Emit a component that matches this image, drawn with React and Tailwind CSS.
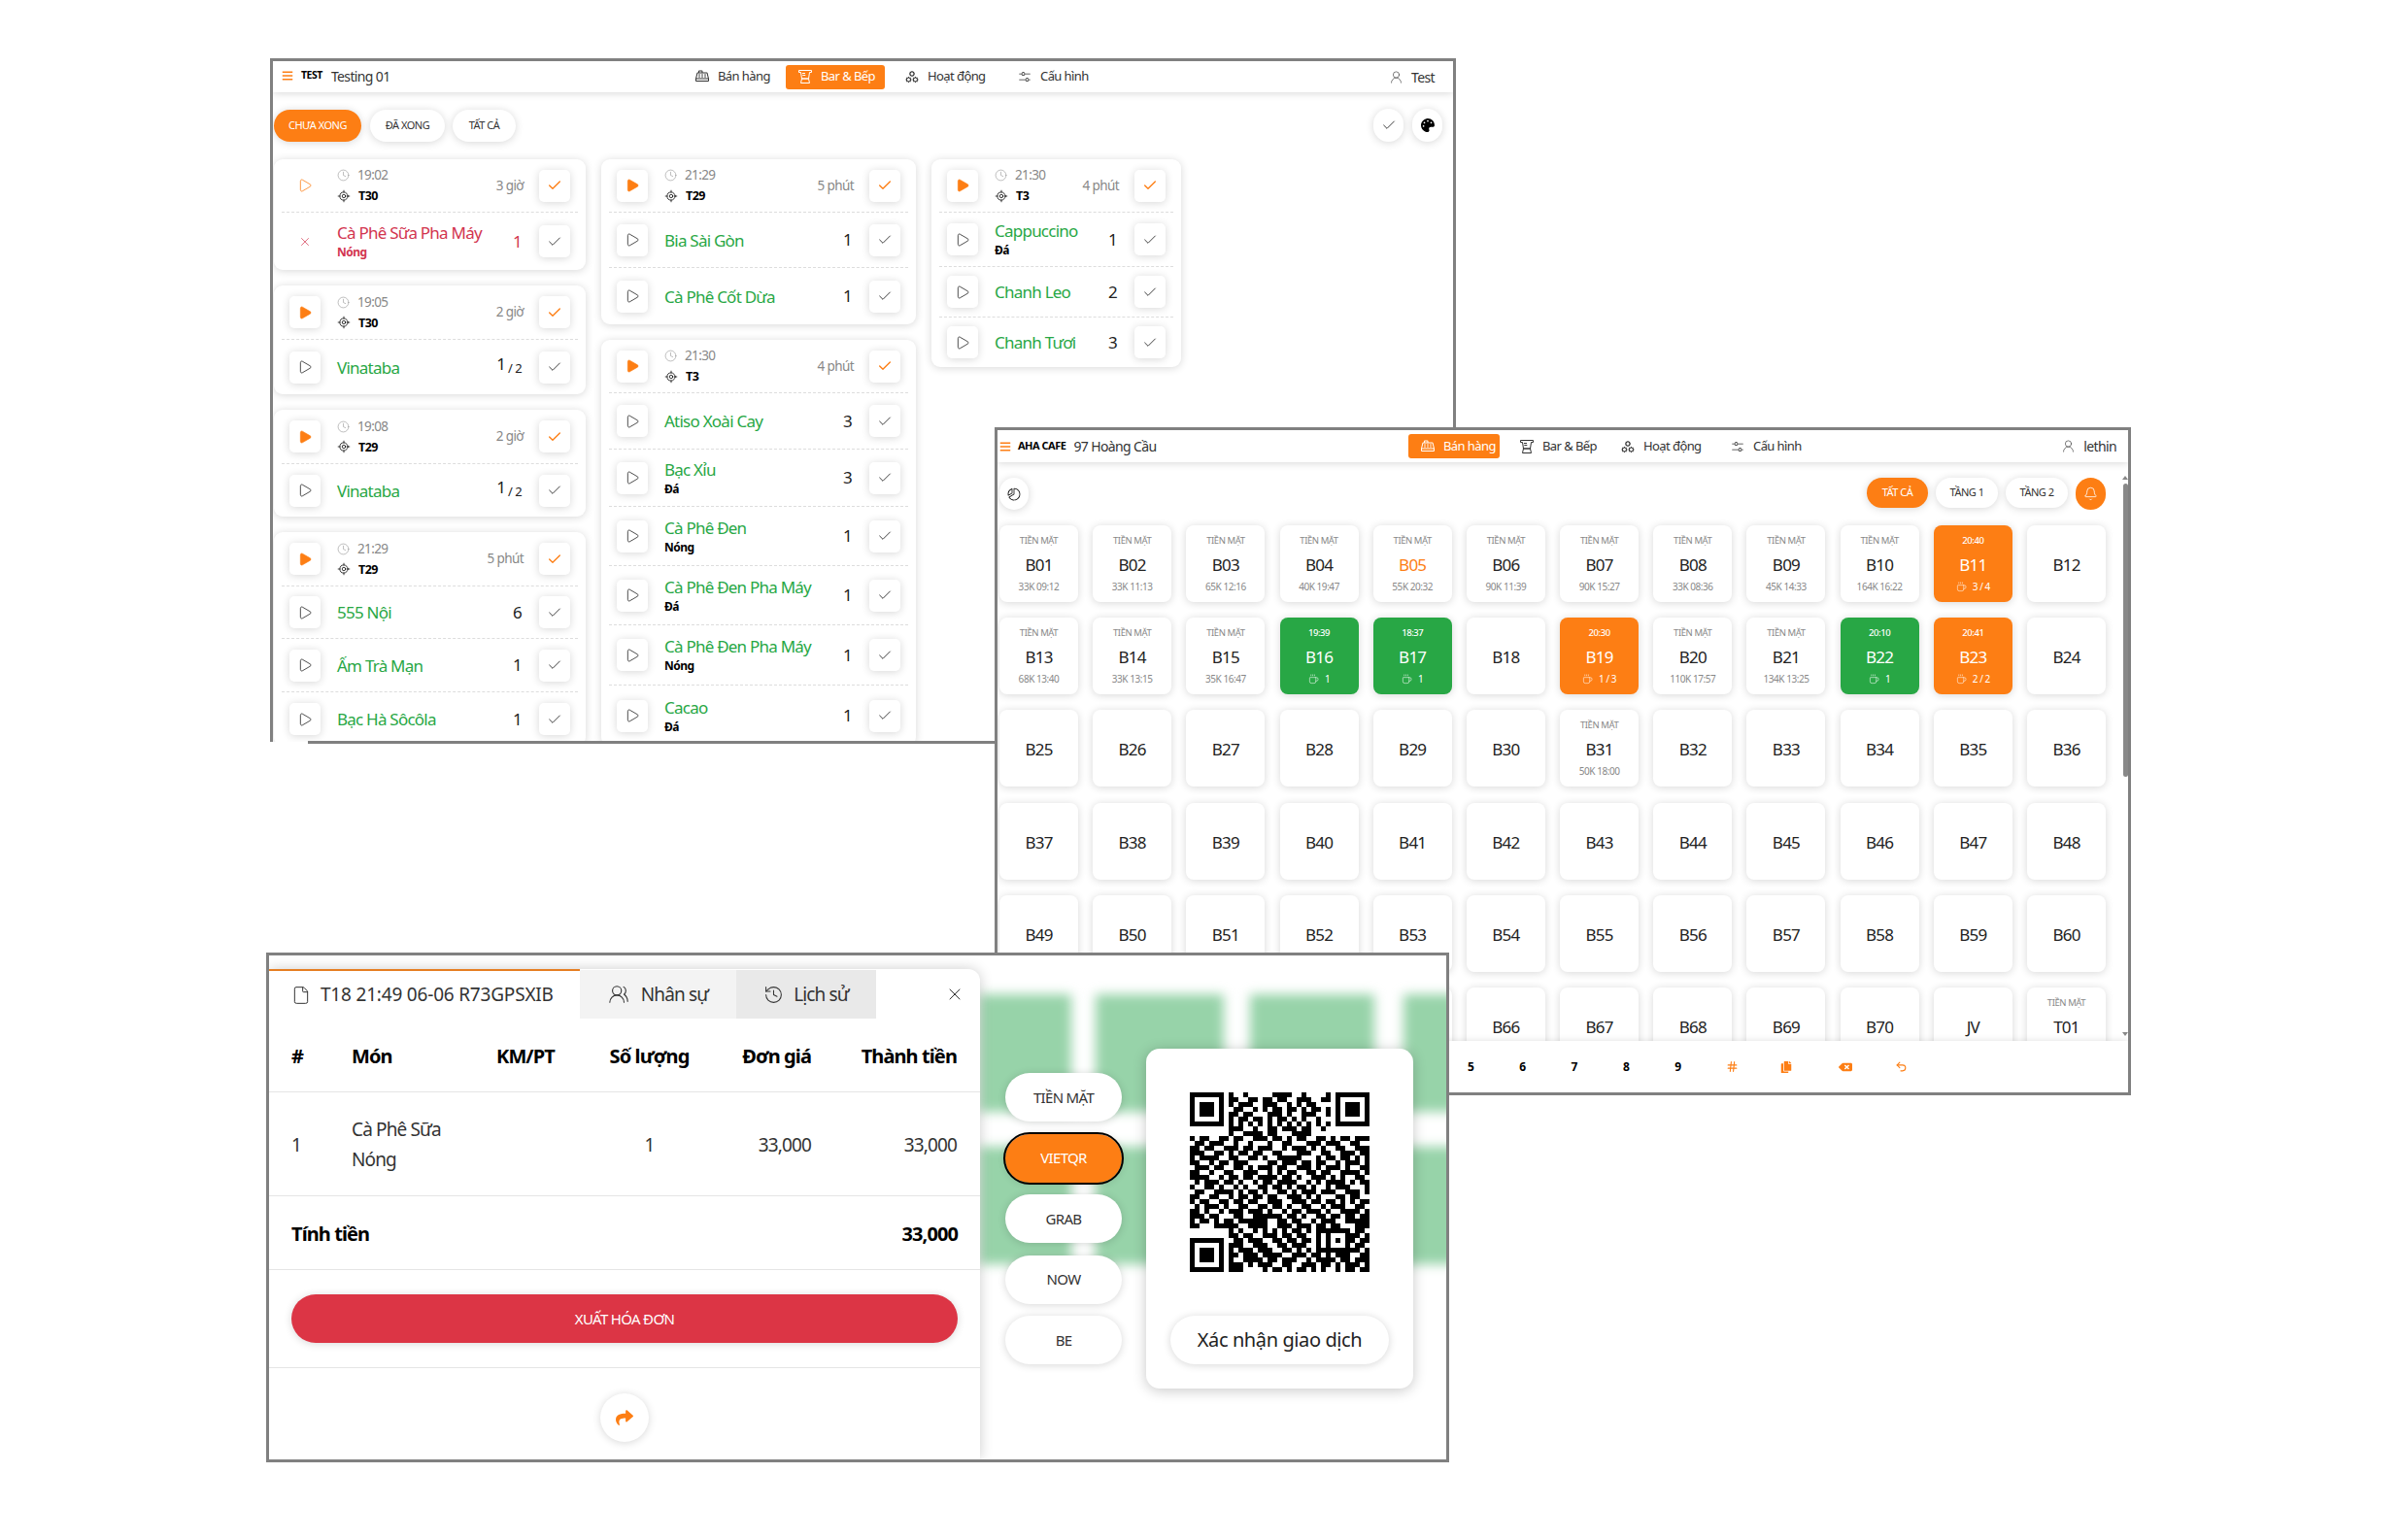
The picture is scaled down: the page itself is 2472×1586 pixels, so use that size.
import { Bell, Check, Clock, Coffee, File, Hash, History, LocateFixed, Play, Undo2, UserRound, UsersRound, X } from "lucide-react";
import { FaBackspace, FaBars, FaCopy, FaPalette, FaShare } from "react-icons/fa";
import { LiaCogsSolid } from "react-icons/lia";
import { PiCashRegister, PiChartPieSliceLight, PiSlidersHorizontalLight } from "react-icons/pi";

const QR_ROWS = [
  "0000000010010000011110010000100000000",
  "0000000011001101101100111001100000000",
  "0000000010111001110010101100000000000",
  "0000000001100101011011010110100000000",
  "0000000011011000111010011100100000000",
  "0000000010110110101101010010000000000",
  "0000000010101010101010101010100000000",
  "0000000011100100110111011001000000000",
  "0000000010011110110001111000000000000",
  "1011001101100111011010110011010110111",
  "0110111001001000100110001110111001100",
  "1101100111011011100101110101001100111",
  "1110011010110110011000111001100111011",
  "1011110011001101001111100010110110101",
  "1100101101110000110111011011001011101",
  "0111011001101011101100111010111010011",
  "1100100110011100101011001101100111101",
  "1111001011011011110110100111010100110",
  "0101110110100101101111001010111101011",
  "1001101001010011011010110100101110001",
  "0110011110101101001101011101110011101",
  "1100110010110110110011101010001101100",
  "1011001101101100111001110110110101011",
  "0101110100110011011010011001011100110",
  "1101001011101110100101101110100111101",
  "1110110001100111111011010011011011011",
  "1011010110111111001101100101110011111",
  "1100011111001111001110111011011000111",
  "0000000010100101010101101011111110110",
  "0000000011011001110110110010001011101",
  "0000000001101110011011011010101001011",
  "0000000011100111001101110010001110110",
  "0000000010111011100110101011111011101",
  "0000000011011101111001110110101110011",
  "0000000010011110110111001011110110111",
  "0000000011101011100110011101101011101",
  "0000000011100001011010110101001011011",
];

function qrPath() {
  let d = "";
  const box = (x, y, w, h) => { d += `M${x} ${y}h${w}v${h}h-${w}z`; };
  QR_ROWS.forEach((row, y) => {
    [...row].forEach((c, x) => {
      const inFinder = (x < 8 && y < 8) || (x > 28 && y < 8) || (x < 8 && y > 28);
      const inAlign = x >= 28 && x <= 32 && y >= 28 && y <= 32;
      if (c === "1" && !inFinder && !inAlign) box(x, y, 1, 1);
    });
  });
  [[0, 0], [30, 0], [0, 30]].forEach(([x, y]) => {
    box(x, y, 7, 1); box(x, y + 6, 7, 1); box(x, y + 1, 1, 5); box(x + 6, y + 1, 1, 5); box(x + 2, y + 2, 3, 3);
  });
  box(28, 28, 5, 1); box(28, 32, 5, 1); box(28, 29, 1, 3); box(32, 29, 1, 3); box(30, 30, 1, 1);
  return d;
}

const softShadow = "shadow-[0_1px_8px_rgba(0,0,0,0.16)]";

function BlenderIcon({ size = 15, className = "" }) {
  return (
    <svg width={size} height={size} viewBox="0 0 16 16" fill="none" stroke="currentColor" strokeWidth="1" className={className}>
      <path d="M1.5 1.5h13v2h-2l-1 6.5h-7l-1-6.5h-2z" />
      <path d="M5 4.5h3M5.3 6.5h3" />
      <path d="M4.5 10h7l1 4.5h-9z" />
    </svg>
  );
}

function NavItem({ icon: Icon, label, active, className = "" }) {
  return (
    <div className={`flex h-[25px] shrink-0 items-center gap-2 rounded-[3px] pl-3 text-[13px] ${active ? "bg-[#fd7e14] text-white" : "text-[#333]"} ${className}`}>
      <Icon size={16} className="shrink-0" />
      <span className="whitespace-nowrap">{label}</span>
    </div>
  );
}

function IconBox({ children, plain }) {
  return (
    <div className={`grid h-[33px] w-[32px] shrink-0 place-items-center rounded-[5px] bg-white ${plain ? "" : softShadow}`}>
      {children}
    </div>
  );
}

const PlayOutline = ({ color = "#222" }) => <Play size={16} strokeWidth={1.2} color={color} />;
const PlayFilled = () => <Play size={16} strokeWidth={1} color="#fd7e14" fill="#fd7e14" />;

function TicketHead({ time, table, ago, first, h = "h-[56px]" }) {
  return (
    <div className={`mx-2 flex items-center border-b border-dashed border-[#ddd] px-2 ${h}`}>
      <IconBox plain={first}>{first ? <PlayOutline color="#fd7e14" /> : <PlayFilled />}</IconBox>
      <div className="ml-[17px] flex-1">
        <div className="flex items-center gap-[8px] text-[13.5px] leading-[21px] text-[#888]">
          <Clock size={13} strokeWidth={1} />
          <span>{time}</span>
        </div>
        <div className="flex items-center gap-[8px] text-[12.5px] font-bold leading-[21px] text-black">
          <LocateFixed size={14} strokeWidth={1.3} />
          <span>{table}</span>
        </div>
      </div>
      <span className="mr-[16px] text-[13.5px] text-[#888]">{ago}</span>
      <IconBox><Check size={16} strokeWidth={2} color="#fd7e14" /></IconBox>
    </div>
  );
}

function TicketItem({ name, note, qty, half, h, cancelled, last }) {
  const color = cancelled ? "text-[#d2354f]" : "text-[#28a745]";
  return (
    <div className={`mx-2 flex items-center px-2 ${last ? "" : "border-b border-dashed border-[#ddd]"} ${h}`}>
      <IconBox plain={cancelled}>
        {cancelled ? <X size={14} strokeWidth={1.2} color="#d2354f" /> : <PlayOutline />}
      </IconBox>
      <div className="ml-[17px] min-w-0 flex-1">
        <div className={`whitespace-nowrap text-[17px] leading-[23px] ${color}`}>{name}</div>
        {note && <div className={`text-[12px] font-bold leading-[18px] ${cancelled ? color : "text-black"}`}>{note}</div>}
      </div>
      <span className={`mr-[18px] whitespace-nowrap text-[17px] ${cancelled ? color : "text-[#222]"}`}>
        <span className={half ? "relative -top-[3px]" : ""}>{qty}</span>
        {half && <span className="text-[13px]"> / 2</span>}
      </span>
      <IconBox><Check size={16} strokeWidth={1.3} color="#222" /></IconBox>
    </div>
  );
}

function TicketCard({ w, head, items }) {
  return (
    <div className={`shrink-0 rounded-[9px] bg-white ${softShadow} ${w}`}>
      <TicketHead {...head} />
      {items.map((item, i) => (
        <TicketItem key={item.name + i} {...item} last={i === items.length - 1} />
      ))}
    </div>
  );
}

function Pill({ label, active, className = "" }) {
  return (
    <div className={`grid place-items-center rounded-full text-[11px] ${softShadow} ${active ? "bg-[#fd7e14] text-white" : "bg-white text-[#333]"} ${className}`}>
      {label}
    </div>
  );
}

function BarWindow() {
  return (
    <div className="absolute left-[278px] top-[60px] z-10 h-[704px] w-[1221px] overflow-hidden border-x-[3px] border-t-[3px] border-[#808080] bg-white">
      <header className={`flex h-[32px] items-center bg-white ${softShadow}`}>
        <div className="flex w-[422px] items-center pb-[2px] pl-[9px]">
          <FaBars size={12} color="#fd7e14" />
          <span className="ml-[8px] text-[10.5px] font-bold text-black">TEST</span>
          <span className="ml-[9px] text-[14px] text-[#333]">Testing 01</span>
        </div>
        <NavItem icon={PiCashRegister} label="Bán hàng" className="w-[98px]" />
        <NavItem icon={BlenderIcon} label="Bar & Bếp" active className="ml-[8px] w-[102px]" />
        <NavItem icon={LiaCogsSolid} label="Hoạt động" className="ml-[8px] w-[109px]" />
        <NavItem icon={PiSlidersHorizontalLight} label="Cấu hình" className="ml-[7px] w-[96px]" />
        <div className="ml-auto flex items-center gap-2 pr-[19px] text-[14px] text-[#333]">
          <UserRound size={15} strokeWidth={1} />
          <span>Test</span>
        </div>
      </header>
      <div className="flex items-center pl-[1px] pr-[11px] pt-[17px]">
        <Pill label="CHƯA XONG" active className="h-[33px] w-[90px]" />
        <Pill label="ĐÃ XONG" className="ml-[9px] h-[33px] w-[77px]" />
        <Pill label="TẤT CẢ" className="ml-[8px] h-[33px] w-[65px]" />
        <div className={`ml-auto grid h-[34px] w-[31px] place-items-center rounded-full bg-white ${softShadow}`}>
          <Check size={16} strokeWidth={1.3} color="#222" />
        </div>
        <div className={`ml-[9px] grid h-[34px] w-[31px] place-items-center rounded-full bg-white ${softShadow}`}>
          <FaPalette size={14} color="#000" />
        </div>
      </div>
      <div className="mt-[18px] flex items-start gap-4 pl-[1px]">
        <div className="flex w-[321px] flex-col gap-4">
          <TicketCard
            w="w-[321px]"
            head={{ time: "19:02", table: "T30", ago: "3 giờ", first: true, h: "h-[55px]" }}
            items={[{ name: "Cà Phê Sữa Pha Máy", note: "Nóng", qty: "1", h: "h-[59px]", cancelled: true }]}
          />
          <TicketCard
            w="w-[321px]"
            head={{ time: "19:05", table: "T30", ago: "2 giờ" }}
            items={[{ name: "Vinataba", qty: "1", half: true, h: "h-[56px]" }]}
          />
          <TicketCard
            w="w-[321px]"
            head={{ time: "19:08", table: "T29", ago: "2 giờ" }}
            items={[{ name: "Vinataba", qty: "1", half: true, h: "h-[54px]" }]}
          />
          <TicketCard
            w="w-[321px]"
            head={{ time: "21:29", table: "T29", ago: "5 phút" }}
            items={[
              { name: "555 Nội", qty: "6", h: "h-[54px]" },
              { name: "Ấm Trà Mạn", qty: "1", h: "h-[55px]" },
              { name: "Bạc Hà Sôcôla", qty: "1", h: "h-[55px]" },
            ]}
          />
        </div>
        <div className="flex w-[324px] flex-col gap-4">
          <TicketCard
            w="w-[324px]"
            head={{ time: "21:29", table: "T29", ago: "5 phút", h: "h-[55px]" }}
            items={[
              { name: "Bia Sài Gòn", qty: "1", h: "h-[57px]" },
              { name: "Cà Phê Cốt Dừa", qty: "1", h: "h-[58px]" },
            ]}
          />
          <TicketCard
            w="w-[324px]"
            head={{ time: "21:30", table: "T3", ago: "4 phút", h: "h-[55px]" }}
            items={[
              { name: "Atiso Xoài Cay", qty: "3", h: "h-[58px]" },
              { name: "Bạc Xỉu", note: "Đá", qty: "3", h: "h-[59px]" },
              { name: "Cà Phê Đen", note: "Nóng", qty: "1", h: "h-[61px]" },
              { name: "Cà Phê Đen Pha Máy", note: "Đá", qty: "1", h: "h-[61px]" },
              { name: "Cà Phê Đen Pha Máy", note: "Nóng", qty: "1", h: "h-[62px]" },
              { name: "Cacao", note: "Đá", qty: "1", h: "h-[62px]" },
            ]}
          />
        </div>
        <TicketCard
          w="w-[257px]"
          head={{ time: "21:30", table: "T3", ago: "4 phút", h: "h-[55px]" }}
          items={[
            { name: "Cappuccino", note: "Đá", qty: "1", h: "h-[56px]" },
            { name: "Chanh Leo", qty: "2", h: "h-[52px]" },
            { name: "Chanh Tươi", qty: "3", h: "h-[51px]" },
          ]}
        />
      </div>
    </div>
  );
}

const PAID = {
  B01: "33K 09:12", B02: "33K 11:13", B03: "65K 12:16", B04: "40K 19:47", B05: "55K 20:32", B06: "90K 11:39",
  B07: "90K 15:27", B08: "33K 08:36", B09: "45K 14:33", B10: "164K 16:22", B13: "68K 13:40", B14: "33K 13:15",
  B15: "35K 16:47", B20: "110K 17:57", B21: "134K 13:25", B31: "50K 18:00", T01: " ",
};
const BUSY = {
  B11: ["#fd7e14", "20:40", "3 / 4"], B16: ["#28a745", "19:39", "1"], B17: ["#28a745", "18:37", "1"],
  B19: ["#fd7e14", "20:30", "1 / 3"], B22: ["#28a745", "20:10", "1"], B23: ["#fd7e14", "20:41", "2 / 2"],
};
const TABLES = [
  ...Array.from({ length: 70 }, (_, i) => `B${String(i + 1).padStart(2, "0")}`),
  "JV", "T01",
];

function TableCell({ name }) {
  const busy = BUSY[name];
  const paid = PAID[name];
  return (
    <div
      className={`flex h-[79px] flex-col items-center rounded-[8px] pt-[10px] ${softShadow} ${busy ? "text-white" : "bg-white text-[#222]"}`}
      style={busy ? { backgroundColor: busy[0] } : undefined}
    >
      <div className={`h-[12px] text-[9.5px] leading-[12px] ${busy ? "font-medium" : "text-[#888]"}`}>
        {busy ? busy[1] : paid ? "TIỀN MẶT" : ""}
      </div>
      <div className={`mt-[8px] h-[22px] text-[17px] leading-[22px] ${name === "B05" ? "text-[#fd7e14]" : ""}`}>{name}</div>
      <div className={`mt-[5px] flex h-[12px] items-center gap-[6px] text-[10px] leading-[12px] ${busy ? "" : "text-[#888]"}`}>
        {busy && <Coffee size={11} strokeWidth={1.2} />}
        {busy ? busy[2] : paid}
      </div>
    </div>
  );
}

function TablesWindow() {
  return (
    <div className="absolute left-[1024px] top-[440px] z-20 flex h-[688px] w-[1170px] flex-col overflow-hidden border-[3px] border-[#808080] bg-white">
      <header className={`z-10 flex h-[33px] shrink-0 items-center bg-white ${softShadow}`}>
        <div className="flex w-[423px] items-center pl-[2px]">
          <FaBars size={12} color="#fd7e14" />
          <span className="ml-[7px] text-[11px] font-bold text-black">AHA CAFE</span>
          <span className="ml-[8px] whitespace-nowrap text-[14px] text-[#333]">97 Hoàng Cầu</span>
        </div>
        <NavItem icon={PiCashRegister} label="Bán hàng" active className="w-[94px]" />
        <NavItem icon={BlenderIcon} label="Bar & Bếp" className="ml-[8px] w-[98px]" />
        <NavItem icon={LiaCogsSolid} label="Hoạt động" className="ml-[6px] w-[106px]" />
        <NavItem icon={PiSlidersHorizontalLight} label="Cấu hình" className="ml-[7px] w-[92px]" />
        <div className="ml-auto flex items-center gap-2 pr-[12px] text-[14px] text-[#333]">
          <UserRound size={15} strokeWidth={1} />
          <span>lethin</span>
        </div>
      </header>
      <div className="relative min-h-0 flex-1 overflow-hidden pl-[2px] pr-[23px]">
        <div className="flex h-[65px] items-start pt-[16px]">
          <div className={`grid h-[33px] w-[30px] place-items-center rounded-full bg-white ${softShadow}`}>
            <PiChartPieSliceLight size={16} />
          </div>
          <Pill label="TẤT CẢ" active className="ml-auto h-[31px] w-[63px]" />
          <Pill label="TẦNG 1" className="ml-[8px] h-[31px] w-[64px]" />
          <Pill label="TẦNG 2" className="ml-[8px] h-[31px] w-[64px]" />
          <div className="ml-[8px] grid h-[33px] w-[31px] place-items-center rounded-full bg-[#fd7e14]">
            <Bell size={15} strokeWidth={1.3} color="#fff" />
          </div>
        </div>
        <div className="grid grid-cols-12 gap-x-[15.2px] gap-y-[16.2px]">
          {TABLES.map((t) => <TableCell key={t} name={t} />)}
        </div>
        {/* scrollbar */}
        <div className="absolute right-0 top-[14px] h-0 w-0 border-x-[3px] border-b-[4px] border-x-transparent border-b-[#888]" />
        <div className="absolute right-0 top-[22px] h-[302px] w-[5px] rounded-full bg-[#888]" />
        <div className="absolute bottom-[5px] right-0 h-0 w-0 border-x-[3px] border-t-[4px] border-x-transparent border-t-[#888]" />
      </div>
      <footer className={`z-10 flex h-[53px] shrink-0 items-center bg-white pl-[484px] text-[12px] font-bold text-black ${softShadow}`}>
        {["5", "6", "7", "8", "9"].map((n) => (
          <span key={n} className="w-[53.3px]">{n}</span>
        ))}
        <span className="w-[56px]"><Hash size={13} color="#fd7e14" strokeWidth={2} /></span>
        <span className="w-[60px]"><FaCopy size={12} color="#fd7e14" /></span>
        <span className="w-[58px]"><FaBackspace size={14} color="#fd7e14" /></span>
        <Undo2 size={13} color="#fd7e14" strokeWidth={2} />
      </footer>
    </div>
  );
}

function PayButton({ label, active }) {
  return (
    <div className={`grid h-[50px] w-[120px] place-items-center rounded-full text-[15px] ${softShadow} ${active ? "bg-[#fd7e14] text-white outline-2 outline-black" : "bg-white text-[#333]"}`}>
      {label}
    </div>
  );
}

function PaymentWindow() {
  const cols = "grid grid-cols-[62px_149px_64px_173px_87px_150px] items-center";
  return (
    <div className="absolute left-[274px] top-[981px] z-30 flex h-[525px] w-[1218px] overflow-hidden border-[3px] border-[#808080] bg-white">
      <div className="z-10 mt-[14px] w-[732px] shrink-0 rounded-tr-xl bg-white shadow-[0_0_14px_rgba(0,0,0,0.2)]">
        <div className="flex h-[51px] items-stretch pt-[1px] text-[19px] text-[#333]">
          <div className="-mt-[1px] flex w-[320px] items-center gap-[10px] border-t-2 border-[#e67e22] pl-[23px]">
            <File size={20} strokeWidth={1.2} />
            <span className="whitespace-nowrap !tracking-[-0.01em]">T18 21:49 06-06 R73GPSXIB</span>
          </div>
          <div className="flex w-[161px] items-center justify-center gap-[12px] bg-[#f3f3f3]">
            <UsersRound size={22} strokeWidth={1.2} />
            <span>Nhân sự</span>
          </div>
          <div className="flex w-[144px] items-center justify-center gap-[10px] bg-[#e9e9e9]">
            <History size={21} strokeWidth={1.2} />
            <span>Lịch sử</span>
          </div>
          <div className="flex flex-1 items-center justify-end pr-[16px]">
            <X size={20} strokeWidth={1.2} />
          </div>
        </div>
        <div className={`${cols} h-[76px] border-b border-[#e5e5e5] px-[23px] pt-[3px] text-[20px] font-bold text-black`}>
          <span>#</span>
          <span>Món</span>
          <span>KM/PT</span>
          <span className="pl-[14px] text-center">Số lượng</span>
          <span className="text-right">Đơn giá</span>
          <span className="text-right">Thành tiền</span>
        </div>
        <div className={`${cols} h-[107px] border-b border-[#e5e5e5] px-[23px] pt-[2px] text-[19px] leading-[31px] text-[#333]`}>
          <span>1</span>
          <span>Cà Phê Sữa<br />Nóng</span>
          <span />
          <span className="pl-[14px] text-center">1</span>
          <span className="text-right">33,000</span>
          <span className="text-right">33,000</span>
        </div>
        <div className="flex h-[76px] items-center justify-between border-b border-[#e5e5e5] px-[23px] pt-[3px] text-[20px] font-bold text-black">
          <span>Tính tiền</span>
          <span>33,000</span>
        </div>
        <div className="flex h-[101px] items-center border-b border-[#e5e5e5] px-[23px]">
          <div className={`grid h-[50px] w-full place-items-center rounded-full bg-[#dc3545] text-[15px] text-white ${softShadow}`}>
            XUẤT HÓA ĐƠN
          </div>
        </div>
        <div className="flex justify-center pt-[26px]">
          <div className={`grid h-[50px] w-[50px] place-items-center rounded-full bg-white ${softShadow}`}>
            <FaShare size={18} color="#fd7e14" />
          </div>
        </div>
      </div>
      <div className="relative min-w-0 flex-1">
        {/* blurred tables behind the dialog */}
        <div className="absolute left-0 top-[40px] h-[121px] w-[94px] bg-[#97d3a9] blur-[6px]" />
        <div className="absolute left-[119px] top-[40px] h-[121px] w-[132px] bg-[#97d3a9] blur-[6px]" />
        <div className="absolute left-[278px] top-[40px] h-[121px] w-[128px] bg-[#97d3a9] blur-[6px]" />
        <div className="absolute left-[436px] top-[40px] h-[121px] w-[60px] bg-[#97d3a9] blur-[6px]" />
        <div className="absolute left-0 top-[197px] h-[121px] w-[94px] bg-[#97d3a9] blur-[6px]" />
        <div className="absolute left-[119px] top-[197px] h-[121px] w-[132px] bg-[#97d3a9] blur-[6px]" />
        <div className="absolute left-[278px] top-[197px] h-[121px] w-[128px] bg-[#97d3a9] blur-[6px]" />
        <div className="absolute left-[436px] top-[197px] h-[121px] w-[60px] bg-[#97d3a9] blur-[6px]" />
        <div className="relative flex items-start pl-[26px] pt-[96px]">
          <div className="mt-[25px] flex flex-col gap-[12.5px]">
            <PayButton label="TIỀN MẶT" />
            <PayButton label="VIETQR" active />
            <PayButton label="GRAB" />
            <PayButton label="NOW" />
            <PayButton label="BE" />
          </div>
          <div className="ml-[25px] flex h-[350px] w-[275px] flex-col items-center rounded-[14px] bg-white pt-[45px] shadow-[0_2px_14px_rgba(0,0,0,0.22)]">
            <svg viewBox="0 0 37 37" className="h-[185px] w-[185px]" shapeRendering="crispEdges">
              <path d={qrPath()} fill="#000" />
            </svg>
            <div className={`mt-[45px] grid h-[50px] w-[225px] place-items-center rounded-full bg-white text-[20px] !tracking-[-0.02em] text-[#222] ${softShadow}`}>
              Xác nhận giao dịch
            </div>
          </div>
        </div>
      </div>
    </div>
  );
}

export default function App() {
  return (
    <div className="relative h-[1586px] w-[2472px] overflow-hidden bg-white [font-family:'Noto_Sans',sans-serif] [&_*]:tracking-[-0.045em]">
      <BarWindow />
      <div className="absolute left-[317px] top-[763px] z-10 h-[3px] w-[710px] bg-[#808080]" />
      <TablesWindow />
      <PaymentWindow />
    </div>
  );
}
